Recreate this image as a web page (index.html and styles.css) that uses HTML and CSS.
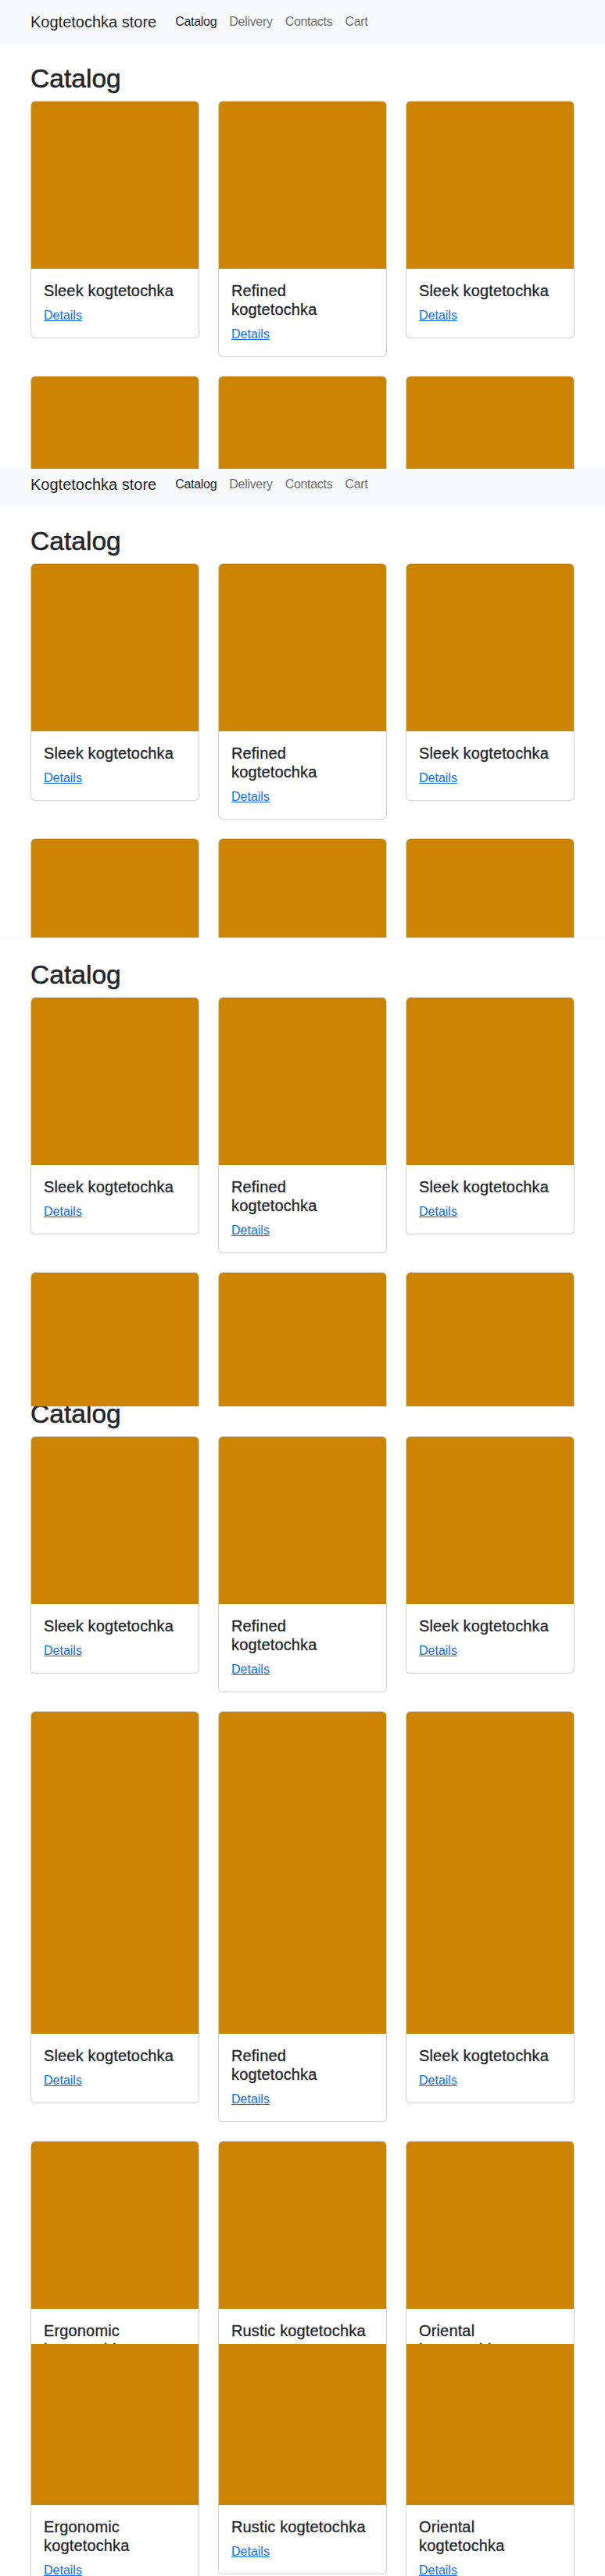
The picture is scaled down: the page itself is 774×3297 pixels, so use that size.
FILE: index.html
```html
<!DOCTYPE html>
<html lang="en">
<head>
<meta charset="utf-8">
<title>Kogtetochka store</title>
<link rel="stylesheet" href="styles.css">
</head>
<body>
<div class="shots">

  <!-- strip 1: top of page -->
  <section class="strip strip-600">
    <nav class="navbar">
      <div class="container nav-inner">
        <a class="brand" href="#">Kogtetochka store</a>
        <ul class="nav-links">
          <li><a class="nav-link active" href="#">Catalog</a></li>
          <li><a class="nav-link" href="#">Delivery</a></li>
          <li><a class="nav-link" href="#">Contacts</a></li>
          <li><a class="nav-link" href="#">Cart</a></li>
        </ul>
      </div>
    </nav>
    <main class="container main">
      <h1 class="page-title">Catalog</h1>
      <div class="grid">
        <div class="card"><div class="card-img"></div><div class="card-body"><h5 class="card-title">Sleek kogtetochka</h5><a class="card-link" href="#">Details</a></div></div>
        <div class="card"><div class="card-img"></div><div class="card-body"><h5 class="card-title">Refined kogtetochka</h5><a class="card-link" href="#">Details</a></div></div>
        <div class="card"><div class="card-img"></div><div class="card-body"><h5 class="card-title">Sleek kogtetochka</h5><a class="card-link" href="#">Details</a></div></div>
        <div class="card"><div class="card-img"></div></div>
        <div class="card"><div class="card-img"></div></div>
        <div class="card"><div class="card-img"></div></div>
      </div>
    </main>
  </section>

  <!-- strip 2: scrolled by 8px -->
  <section class="strip strip-600">
    <nav class="navbar shift-8">
      <div class="container nav-inner">
        <a class="brand" href="#">Kogtetochka store</a>
        <ul class="nav-links">
          <li><a class="nav-link active" href="#">Catalog</a></li>
          <li><a class="nav-link" href="#">Delivery</a></li>
          <li><a class="nav-link" href="#">Contacts</a></li>
          <li><a class="nav-link" href="#">Cart</a></li>
        </ul>
      </div>
    </nav>
    <main class="container main">
      <h1 class="page-title">Catalog</h1>
      <div class="grid">
        <div class="card"><div class="card-img"></div><div class="card-body"><h5 class="card-title">Sleek kogtetochka</h5><a class="card-link" href="#">Details</a></div></div>
        <div class="card"><div class="card-img"></div><div class="card-body"><h5 class="card-title">Refined kogtetochka</h5><a class="card-link" href="#">Details</a></div></div>
        <div class="card"><div class="card-img"></div><div class="card-body"><h5 class="card-title">Sleek kogtetochka</h5><a class="card-link" href="#">Details</a></div></div>
        <div class="card"><div class="card-img"></div></div>
        <div class="card"><div class="card-img"></div></div>
        <div class="card"><div class="card-img"></div></div>
      </div>
    </main>
  </section>

  <!-- strip 3: navbar scrolled almost out of view -->
  <section class="strip strip-600 navbar-edge">
    <main class="container main">
      <h1 class="page-title">Catalog</h1>
      <div class="grid">
        <div class="card"><div class="card-img"></div><div class="card-body"><h5 class="card-title">Sleek kogtetochka</h5><a class="card-link" href="#">Details</a></div></div>
        <div class="card"><div class="card-img"></div><div class="card-body"><h5 class="card-title">Refined kogtetochka</h5><a class="card-link" href="#">Details</a></div></div>
        <div class="card"><div class="card-img"></div><div class="card-body"><h5 class="card-title">Sleek kogtetochka</h5><a class="card-link" href="#">Details</a></div></div>
        <div class="card"><div class="card-img"></div></div>
        <div class="card"><div class="card-img"></div></div>
        <div class="card"><div class="card-img"></div></div>
      </div>
    </main>
  </section>

  <!-- strip 4: heading partly scrolled off -->
  <section class="strip strip-1200">
    <main class="container main shift-35">
      <h1 class="page-title">Catalog</h1>
      <div class="grid">
        <div class="card"><div class="card-img"></div><div class="card-body"><h5 class="card-title">Sleek kogtetochka</h5><a class="card-link" href="#">Details</a></div></div>
        <div class="card"><div class="card-img"></div><div class="card-body"><h5 class="card-title">Refined kogtetochka</h5><a class="card-link" href="#">Details</a></div></div>
        <div class="card"><div class="card-img"></div><div class="card-body"><h5 class="card-title">Sleek kogtetochka</h5><a class="card-link" href="#">Details</a></div></div>
        <div class="card"><div class="card-img tall"></div><div class="card-body"><h5 class="card-title">Sleek kogtetochka</h5><a class="card-link" href="#">Details</a></div></div>
        <div class="card"><div class="card-img tall"></div><div class="card-body"><h5 class="card-title">Refined kogtetochka</h5><a class="card-link" href="#">Details</a></div></div>
        <div class="card"><div class="card-img tall"></div><div class="card-body"><h5 class="card-title">Sleek kogtetochka</h5><a class="card-link" href="#">Details</a></div></div>
        <div class="card"><div class="card-img"></div><div class="card-body"><h5 class="card-title">Ergonomic kogtetochka</h5><a class="card-link" href="#">Details</a></div></div>
        <div class="card"><div class="card-img"></div><div class="card-body"><h5 class="card-title">Rustic kogtetochka</h5><a class="card-link" href="#">Details</a></div></div>
        <div class="card"><div class="card-img"></div><div class="card-body"><h5 class="card-title">Oriental kogtetochka</h5><a class="card-link" href="#">Details</a></div></div>
      </div>
    </main>
  </section>

  <!-- strip 5: last row -->
  <section class="strip strip-last">
    <div class="container grid shift-9">
      <div class="card"><div class="card-img"></div><div class="card-body"><h5 class="card-title">Ergonomic kogtetochka</h5><a class="card-link" href="#">Details</a></div></div>
      <div class="card"><div class="card-img"></div><div class="card-body"><h5 class="card-title">Rustic kogtetochka</h5><a class="card-link" href="#">Details</a></div></div>
      <div class="card"><div class="card-img"></div><div class="card-body"><h5 class="card-title">Oriental kogtetochka</h5><a class="card-link" href="#">Details</a></div></div>
    </div>
  </section>

</div>
</body>
</html>
```

FILE: styles.css
```css
* {
  box-sizing: border-box;
}

html, body {
  margin: 0;
  padding: 0;
  background: #ffffff;
}

body {
  font-family: "Liberation Sans", Arial, sans-serif;
  font-size: 16px;
  line-height: 1.5;
  color: #212529;
}

.shots {
  display: flex;
  flex-direction: column;
}

.strip {
  overflow: hidden;
  background: #ffffff;
  flex: none;
}

.strip-600 { height: 600px; }
.strip-1200 { height: 1200px; }
.strip-last { height: 297px; }

/* last few pixels of the navbar still visible at the top */
.navbar-edge {
  border-top: 3px solid #f8f9fa;
}

.shift-8 { margin-top: -8px; }
.shift-35 { margin-top: -35px; }
.shift-9 { margin-top: -9px; }

.container {
  width: 100%;
  max-width: 720px;
  margin-left: auto;
  margin-right: auto;
  padding-left: 12px;
  padding-right: 12px;
}

/* navbar */
.navbar {
  background: #f8f9fa;
  padding: 8px 0;
}

.nav-inner {
  display: flex;
  align-items: center;
}

.brand {
  font-size: 20px;
  line-height: 30px;
  padding: 5px 0;
  margin-right: 16px;
  color: rgba(0, 0, 0, 0.9);
  text-decoration: none;
  white-space: nowrap;
}

.nav-links {
  display: flex;
  list-style: none;
  margin: 0;
  padding: 0;
}

.nav-link {
  display: block;
  padding: 8px;
  font-size: 16px;
  line-height: 24px;
  color: rgba(0, 0, 0, 0.6);
  text-decoration: none;
  letter-spacing: -0.3px;
}

.nav-link.active {
  color: rgba(0, 0, 0, 0.9);
}

/* main */
.main {
  padding-top: 25px;
}

.page-title {
  font-size: 33.6px;
  line-height: 40px;
  font-weight: 500;
  margin: 0 0 8px;
  color: #212529;
  -webkit-text-stroke: 0.5px #212529;
}

.grid {
  display: grid;
  grid-template-columns: repeat(3, 1fr);
  column-gap: 24px;
  row-gap: 24px;
  align-items: start;
}

.card {
  background: #ffffff;
  border: 1px solid rgba(0, 0, 0, 0.175);
  border-radius: 6px;
  overflow: hidden;
}

.card-img {
  height: 214px;
  background: #cc8400;
}

.card-img.tall {
  height: 412px;
}

.card-body {
  padding: 16px;
}

.card-title {
  font-size: 20px;
  line-height: 24px;
  font-weight: 500;
  margin: 0 0 8px;
  color: #212529;
  letter-spacing: 0.15px;
  -webkit-text-stroke: 0.3px #212529;
}

.card-link {
  font-size: 16px;
  line-height: 24px;
  color: #0d6efd;
  text-decoration: underline;
}
```
